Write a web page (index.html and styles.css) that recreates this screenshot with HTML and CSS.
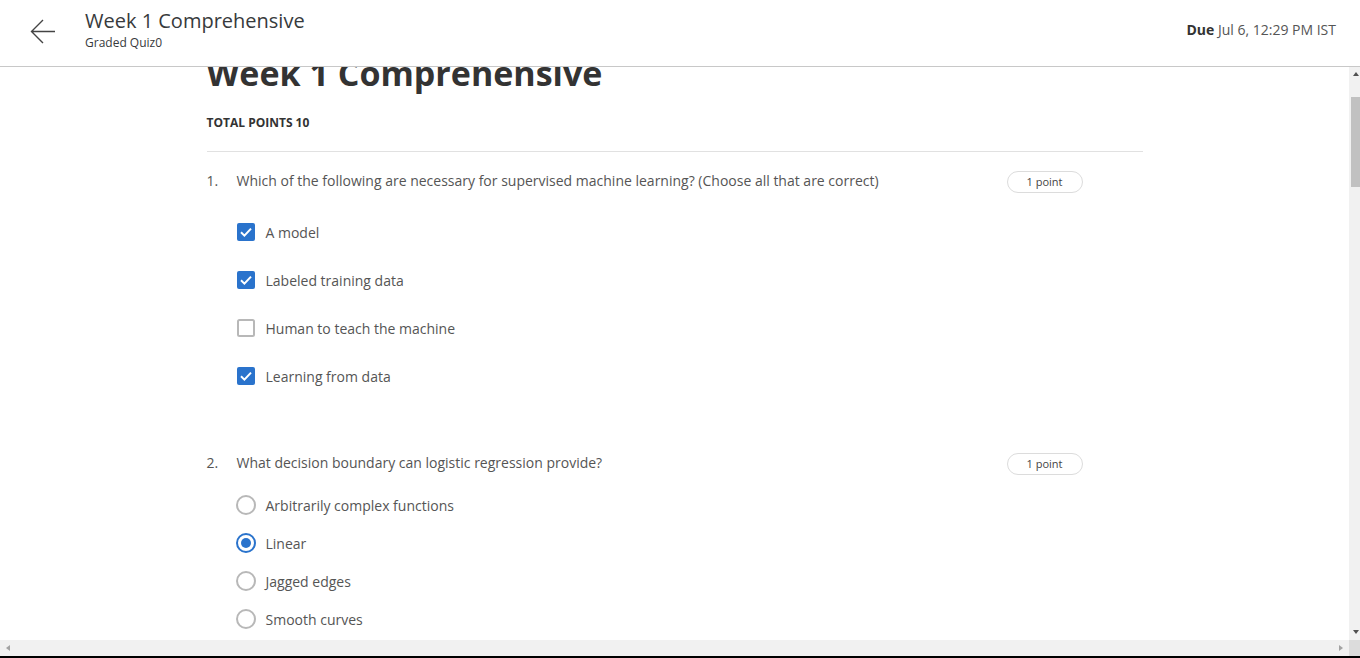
FILE: index.html
```html
<!DOCTYPE html>
<html lang="en">
<head>
<meta charset="utf-8">
<title>Week 1 Comprehensive</title>
<link rel="stylesheet" href="styles.css">
</head>
<body>
<header class="topbar">
  <button class="back" aria-label="Back">
    <svg width="28" height="28" viewBox="0 0 28 28"><path d="M27 12.5H3.5M15 1L3.5 12.5L15 24" fill="none" stroke="#444" stroke-width="1.4"/></svg>
  </button>
  <div class="titles">
    <div class="t-main">Week 1 Comprehensive</div>
    <div class="t-sub">Graded Quiz0</div>
  </div>
  <div class="due"><b>Due</b> Jul 6, 12:29 PM IST</div>
</header>
<div class="viewport">
  <div class="scroll-area">
    <main class="page">
      <h1 class="quiz-title">Week 1 Comprehensive</h1>
      <div class="total">TOTAL POINTS 10</div>

      <section class="question">
        <div class="q-row">
          <span class="q-num">1.</span>
          <span class="q-text">Which of the following are necessary for supervised machine learning? (Choose all that are correct)</span>
          <span class="pill">1 point</span>
        </div>
        <div class="options checks">
          <div class="opt"><span class="box on"><svg width="18" height="18" viewBox="0 0 18 18"><rect width="18" height="18" rx="2" fill="#2a73cc"/><path d="M4 9.3L7.4 12.6L14 5.6" fill="none" stroke="#fff" stroke-width="2"/></svg></span><span class="lbl">A model</span></div>
          <div class="opt"><span class="box on"><svg width="18" height="18" viewBox="0 0 18 18"><rect width="18" height="18" rx="2" fill="#2a73cc"/><path d="M4 9.3L7.4 12.6L14 5.6" fill="none" stroke="#fff" stroke-width="2"/></svg></span><span class="lbl">Labeled training data</span></div>
          <div class="opt"><span class="box"><svg width="18" height="18" viewBox="0 0 18 18"><rect x="1" y="1" width="16" height="16" rx="1.5" fill="#fff" stroke="#b8b8b8" stroke-width="2"/></svg></span><span class="lbl">Human to teach the machine</span></div>
          <div class="opt"><span class="box on"><svg width="18" height="18" viewBox="0 0 18 18"><rect width="18" height="18" rx="2" fill="#2a73cc"/><path d="M4 9.3L7.4 12.6L14 5.6" fill="none" stroke="#fff" stroke-width="2"/></svg></span><span class="lbl">Learning from data</span></div>
        </div>
      </section>

      <section class="question q2">
        <div class="q-row">
          <span class="q-num">2.</span>
          <span class="q-text">What decision boundary can logistic regression provide?</span>
          <span class="pill">1 point</span>
        </div>
        <div class="options radios">
          <div class="opt"><span class="radio"></span><span class="lbl">Arbitrarily complex functions</span></div>
          <div class="opt"><span class="radio on"></span><span class="lbl">Linear</span></div>
          <div class="opt"><span class="radio"></span><span class="lbl">Jagged edges</span></div>
          <div class="opt"><span class="radio"></span><span class="lbl">Smooth curves</span></div>
        </div>
      </section>
    </main>
  </div>
  <div class="vbar">
    <span class="arr-up"></span>
    <span class="thumb"></span>
    <span class="vspace"></span>
    <span class="arr-down"></span>
  </div>
</div>
<div class="hbar">
  <div class="htrack">
    <span class="arr-left"></span>
    <span class="arr-right"></span>
  </div>
  <div class="corner"></div>
</div>
<div class="bottom-edge"></div>
</body>
</html>
```
FILE: styles.css
```css
* { box-sizing: border-box; }
html, body { margin: 0; padding: 0; }
body {
  width: 1360px;
  height: 658px;
  overflow: hidden;
  display: flex;
  flex-direction: column;
  font-family: "Open Sans", "DejaVu Sans", sans-serif;
  color: #373a3c;
  background: #fff;
}

/* header */
.topbar {
  height: 67px;
  flex: none;
  display: flex;
  align-items: center;
  border-bottom: 1px solid #c8c8c8;
  padding: 0 24px 0 28px;
}
.back {
  width: 28px;
  height: 28px;
  padding: 0;
  border: 0;
  background: none;
  display: flex;
  margin-top: 0;
}
.titles {
  margin-left: 29px;
  flex: 1;
  display: flex;
  flex-direction: column;
  margin-top: -7px;
}
.t-main {
  font-size: 20px;
  line-height: 26px;
  color: #373a3c;
}
.t-sub {
  margin-top: 1px;
  font-size: 12px;
  line-height: 16px;
  color: #373a3c;
}
.due {
  font-size: 14px;
  color: #555;
  margin-top: -7px;
}
.due b { color: #333; font-weight: 700; }

/* viewport with fake scrollbars */
.viewport {
  flex: none;
  height: 573px;
  display: flex;
}
.scroll-area {
  flex: 1;
  overflow: hidden;
}
.vbar {
  width: 11px;
  flex: none;
  background: #f1f1f1;
  display: flex;
  flex-direction: column;
  align-items: flex-start;
}
.arr-up {
  margin: 5px 0 0 4px;
  width: 0; height: 0;
  border-left: 3.5px solid transparent;
  border-right: 3.5px solid transparent;
  border-bottom: 4px solid #505050;
}
.thumb {
  margin: 21px 0 0 2px;
  width: 9px;
  height: 90px;
  background: #c1c1c1;
}
.vspace { flex: 1; }
.arr-down {
  margin: 0 0 6px 4px;
  width: 0; height: 0;
  border-left: 3.5px solid transparent;
  border-right: 3.5px solid transparent;
  border-top: 4px solid #505050;
}
.hbar {
  height: 16px;
  flex: none;
  display: flex;
}
.htrack {
  flex: 1;
  background: #f1f1f1;
  display: flex;
  align-items: center;
  justify-content: space-between;
  padding: 0 6px;
}
.arr-left {
  width: 0; height: 0;
  border-top: 3.5px solid transparent;
  border-bottom: 3.5px solid transparent;
  border-right: 4px solid #a3a3a3;
}
.arr-right {
  width: 0; height: 0;
  border-top: 3.5px solid transparent;
  border-bottom: 3.5px solid transparent;
  border-left: 4px solid #a3a3a3;
}
.corner {
  width: 11px;
  background: #dcdcdc;
}
.bottom-edge {
  height: 2px;
  flex: none;
  background: #000;
}

/* page content */
.page {
  max-width: 936px;
  margin: 0 auto;
}
.quiz-title {
  margin: -16px 0 0;
  font-size: 34px;
  line-height: 44px;
  font-weight: 700;
  color: #333;
}
.total {
  margin-top: 20px;
  font-size: 12px;
  line-height: 16px;
  font-weight: 700;
  color: #333;
  padding-bottom: 20px;
  border-bottom: 1px solid #e1e1e1;
}
.question { margin-top: 19px; }
.question.q2 { margin-top: 53px; }
.q-row {
  display: flex;
  align-items: flex-start;
  padding-right: 60px;
  height: 22px;
}
.q-num {
  width: 30px;
  flex: none;
  font-size: 14px;
  line-height: 20px;
  color: #555;
}
.q-text {
  flex: 1;
  font-size: 14px;
  line-height: 20px;
  color: #555;
}
.pill {
  flex: none;
  width: 76px;
  height: 22px;
  border: 1px solid #dcdcdc;
  border-radius: 11px;
  font-size: 11px;
  line-height: 20px;
  text-align: center;
  color: #444;
}
.options { padding-left: 29px; }
.checks { margin-top: 15px; }
.radios { margin-top: 11px; }
.opt {
  display: flex;
  align-items: center;
  gap: 10px;
}
.checks .opt { height: 48px; }
.radios .opt { height: 38px; }
.box {
  width: 20px;
  height: 18px;
  display: flex;
  justify-content: center;
}
.radio {
  width: 20px;
  height: 20px;
  border-radius: 50%;
  border: 2px solid #b8b8b8;
  display: flex;
  align-items: center;
  justify-content: center;
}
.radio.on { border-color: #2a73cc; }
.radio.on::after {
  content: "";
  width: 10px;
  height: 10px;
  border-radius: 50%;
  background: #2a73cc;
}
.lbl {
  font-size: 14px;
  color: #555;
}
```
